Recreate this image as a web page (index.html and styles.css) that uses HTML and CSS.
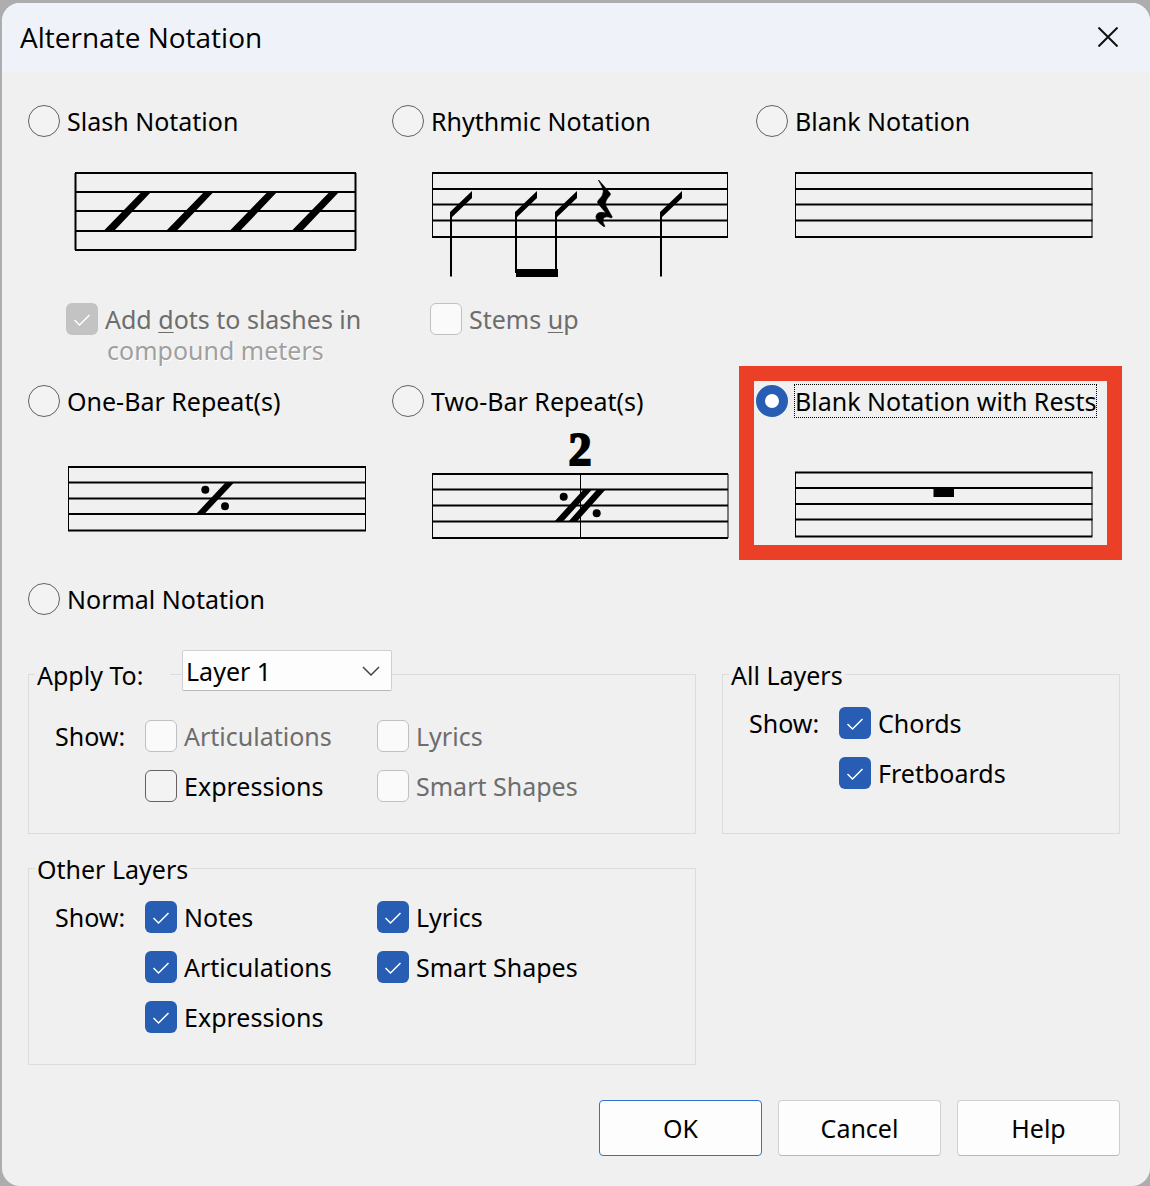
FILE: index.html
```html
<!DOCTYPE html>
<html lang="en">
<head>
    <meta charset="UTF-8">
    <meta name="viewport" content="width=device-width, initial-scale=1.0">
    <title>Alternate Notation</title>
    <link rel="stylesheet" href="styles.css">
</head>
<body>
    <form class="dialog">
        <header class="titlebar">
            <h1>Alternate Notation</h1>
            <button type="button" class="close" aria-label="Close">
                <svg width="20" height="20" viewBox="0 0 20 20"><path d="M0.5 0.5L19.5 19.5M19.5 0.5L0.5 19.5"/></svg>
            </button>
        </header>

        <div class="content">
            <div class="styles">
                <div class="style">
                    <label class="option"><input type="radio" name="notation"><span>Slash Notation</span></label>
                    <svg class="staff" viewBox="0 0 300 150">
                        <path class="lines" d="M9 36H290M9 55H290M9 74H290M9 94H290M9 113H290"/>
                        <path class="lines" d="M9.5 36V113M289.5 36V113"/>
                        <path d="M75.5 55H85L48 94H37.5ZM138 55H147.5L110.5 94H100ZM201.500 55H211L174 94H163.500ZM263.500 55H273L236 94H225.500Z"/>
                    </svg>
                    <label class="option sub"><input type="checkbox" checked disabled><span>Add <u>d</u>ots to slashes in</span></label>
                    <p class="more">compound meters</p>
                </div>

                <div class="style">
                    <label class="option"><input type="radio" name="notation"><span>Rhythmic Notation</span></label>
                    <svg class="staff" viewBox="0 0 300 150">
                        <path class="lines" d="M2 36H298M2 52H298M2 67.500H298M2 83.500H298M2 100H298"/>
                        <path class="ends" d="M2.500 36V100M297.500 36V100"/>
                        <path class="lines" d="M21 76V139.500M86 76V136M126 76V136M231 76V139.500"/>
                        <path d="M20 75L42 54V61L20 82ZM85 75L107 54V61L85 82ZM125 75L147 54V61L125 82ZM230 75L252 54V61L230 82Z"/>
                        <path d="M86 132H128V140H86Z"/>
                        <path transform="translate(-50 -47) scale(.3333)" stroke="#000" stroke-width="2" d="M656 270L690 309Q693 312 690 316Q672 335 678 348L697 381L694 384Q676 376 670 386Q666 396 675 409L672 410Q646 393 648 379Q652 362 678 369L655 342Q650 336 655 331Q670 318 670 304Q668 290 656 272Z"/>
                    </svg>
                    <label class="option sub"><input type="checkbox" disabled><span>Stems <u>u</u>p</span></label>
                </div>

                <div class="style">
                    <label class="option"><input type="radio" name="notation"><span>Blank Notation</span></label>
                    <svg class="staff" viewBox="0 0 300 150">
                        <path class="lines" d="M1 36H298.500M1 52H298.500M1 67.500H298.500M1 83.500H298.500M1 100H298.500"/>
                        <path class="ends" d="M1.500 36V100M298 36V100"/>
                    </svg>
                </div>

                <div class="style">
                    <label class="option"><input type="radio" name="notation"><span>One-Bar Repeat(s)</span></label>
                    <svg class="staff" viewBox="0 0 300 150">
                        <path class="lines" d="M2 50H300M2 65.500H300M2 81.500H300M2 97H300M2 113.500H300"/>
                        <path class="ends" d="M2.500 50V113M299.500 50V113"/>
                        <path d="M160 65H168.500L138.500 97H130Z"/>
                        <circle cx="139.300" cy="72.700" r="4"/>
                        <circle cx="159" cy="89.300" r="4"/>
                    </svg>
                </div>

                <div class="style">
                    <label class="option"><input type="radio" name="notation"><span>Two-Bar Repeat(s)</span></label>
                    <svg class="staff" viewBox="0 0 300 150">
                        <text x="150" y="48" text-anchor="middle">2</text>
                        <path class="lines" d="M2 57H298M2 72.500H298M2 88.500H298M2 104.500H298M2 121H298"/>
                        <path class="ends" d="M2.500 57V121M298 57V121"/>
                        <path class="ends" d="M150.500 57V121"/>
                        <path d="M154 72H162.500L132.500 105H124ZM167.500 72H176L146.500 105H138Z"/>
                        <circle cx="133.700" cy="79.700" r="4"/>
                        <circle cx="166.700" cy="96.300" r="4"/>
                    </svg>
                </div>

                <div class="style highlight">
                    <label class="option"><input type="radio" name="notation" checked><span>Blank Notation with Rests</span></label>
                    <svg class="staff" viewBox="0 0 300 150">
                        <path class="lines" d="M1 55.500H298.500M1 71H298.500M1 87H298.500M1 102.500H298.500M1 119.500H298.500"/>
                        <path class="ends" d="M1.500 55V119M298 55V119"/>
                        <path d="M139.500 71H160V80H139.500Z"/>
                    </svg>
                </div>

                <div class="style">
                    <label class="option"><input type="radio" name="notation"><span>Normal Notation</span></label>
                </div>
            </div>

            <div class="groups">
                <fieldset class="apply">
                    <legend>
                        <label for="layer">Apply To:</label>
                        <select id="layer">
                            <option>Layer 1</option>
                            <option>Layer 2</option>
                            <option>Layer 3</option>
                            <option>Layer 4</option>
                        </select>
                    </legend>
                    <div class="show">
                        <span class="caption">Show:</span>
                        <label class="option"><input type="checkbox" disabled><span>Articulations</span></label>
                        <label class="option"><input type="checkbox" disabled><span>Lyrics</span></label>
                        <label class="option first"><input type="checkbox"><span>Expressions</span></label>
                        <label class="option"><input type="checkbox" disabled><span>Smart Shapes</span></label>
                    </div>
                </fieldset>

                <fieldset>
                    <legend><span>All Layers</span></legend>
                    <div class="show">
                        <span class="caption">Show:</span>
                        <label class="option"><input type="checkbox" checked><span>Chords</span></label>
                        <label class="option first"><input type="checkbox" checked><span>Fretboards</span></label>
                    </div>
                </fieldset>

                <fieldset>
                    <legend><span>Other Layers</span></legend>
                    <div class="show">
                        <span class="caption">Show:</span>
                        <label class="option"><input type="checkbox" checked><span>Notes</span></label>
                        <label class="option"><input type="checkbox" checked><span>Lyrics</span></label>
                        <label class="option first"><input type="checkbox" checked><span>Articulations</span></label>
                        <label class="option"><input type="checkbox" checked><span>Smart Shapes</span></label>
                        <label class="option first"><input type="checkbox" checked><span>Expressions</span></label>
                    </div>
                </fieldset>
            </div>

            <div class="buttons">
                <button type="submit" class="btn default">OK</button>
                <button type="button" class="btn">Cancel</button>
                <button type="button" class="btn">Help</button>
            </div>
        </div>
    </form>
</body>
</html>
```
FILE: styles.css
```css
* {
    box-sizing: border-box;
}
body {
    margin: 0;
    padding: 3px 0 0 2px;
    background-color: #adadad;
    font-family: "Noto Sans", sans-serif;
    font-size: 25px;
    line-height: 32px;
    color: #000;
}
.dialog {
    min-height: calc(100vh - 3px);
    background-color: #f0f0f0;
    border-radius: 18px;
    overflow: hidden;
}
.titlebar {
    display: flex;
    align-items: center;
    justify-content: space-between;
    height: 69px;
    padding: 0 32px 2px 18px;
    background-color: #eff3f9;
}
h1 {
    margin: 0;
    font-family: "Open Sans", sans-serif;
    font-size: 28px;
    font-weight: normal;
}
.close {
    display: flex;
    padding: 0;
    border: none;
    background: none;
    cursor: pointer;
}
.close svg {
    fill: none;
    stroke: #111;
    stroke-width: 2;
}
.content {
    padding: 33px 30px 30px 26px;
}

/* notation styles */
.styles {
    display: grid;
    grid-template-columns: repeat(3, 1fr);
    row-gap: 16px;
}
.style {
    position: relative;
}
.option {
    display: flex;
    align-items: center;
    gap: 7px;
    height: 32px;
    white-space: nowrap;
}
.sub {
    margin: 16px 0 0 38px;
}
.more {
    margin: 0 0 4px 79px;
    line-height: 30px;
    color: #a0a0a0;
    text-shadow: 1px 1px #fff;
}
.staff {
    display: block;
    width: 300px;
    height: 150px;
    margin-left: 38px;
}
.staff .lines,
.staff .ends {
    fill: none;
    stroke: #000;
    stroke-width: 2;
}
.staff .ends {
    stroke-width: 1;
}
.staff text {
    font-family: "Liberation Serif", serif;
    font-size: 46px;
    font-weight: bold;
    stroke: #000;
    stroke-width: 2;
}
.highlight::after {
    content: "";
    position: absolute;
    inset: -19px -2px 7px -17px;
    border: 15px solid #eb4027;
    pointer-events: none;
}
.highlight .option span {
    outline: 1px dotted #000;
}

/* radios and tick boxes */
input {
    flex: none;
    width: 32px;
    height: 32px;
    margin: 0;
    appearance: none;
    border: 1px solid #626262;
    background: #f3f3f3 center / 100% no-repeat;
}
input[type="radio"] {
    border-radius: 50%;
}
input[type="radio"]:checked {
    border: 9px solid #275eb4;
    background-color: #fff;
}
input[type="checkbox"] {
    border-radius: 6px;
}
input[type="checkbox"]:checked {
    border: none;
    background-color: #275eb4;
    background-image: url("data:image/svg+xml,%3Csvg xmlns='http://www.w3.org/2000/svg' viewBox='0 0 32 32'%3E%3Cpath d='M8.500 17l5 5L23.500 12' fill='none' stroke='white' stroke-width='1.500'/%3E%3C/svg%3E");
}
input:disabled {
    border-color: #c0c0c0;
    background-color: #fafafa;
}
input[type="checkbox"]:checked:disabled {
    background-color: #c3c3c3;
}
input:disabled + span {
    color: #6d6d6d;
}
u {
    text-decoration-thickness: 1px;
    text-underline-offset: 3px;
}

/* layer groups */
.groups {
    display: grid;
    grid-template-columns: 668fr 398fr;
    gap: 34px 26px;
    margin-top: 59px;
}
fieldset {
    min-width: 0;
    margin: 0;
    padding: 0 0 31px 26px;
    border: 1px solid #dcdcdc;
}
legend {
    display: flex;
    float: left;
    align-items: flex-end;
    gap: 12px;
    width: 100%;
    height: 41px;
    margin: -25px 0 16px -20px;
    padding: 0;
}
.apply legend {
    margin-bottom: 29px;
}
legend span,
legend label {
    padding: 0 2px;
    background-color: #f0f0f0;
}
legend label {
    width: 135px;
}
select {
    width: 210px;
    height: 41px;
    padding: 0 3px;
    appearance: none;
    border: 1px solid #d0d0d0;
    border-bottom-color: #b8b8b8;
    border-radius: 2px;
    background: #fdfdfd url("data:image/svg+xml,%3Csvg xmlns='http://www.w3.org/2000/svg' viewBox='0 0 18 10'%3E%3Cpath d='M1 1l8 8 8-8' fill='none' stroke='%23444' stroke-width='1.500'/%3E%3C/svg%3E") right 11px center / 18px 10px no-repeat;
    font: inherit;
    color: inherit;
}
.show {
    display: grid;
    clear: both;
    grid-template-columns: 90px 232px 1fr;
    row-gap: 18px;
}
.first {
    grid-column: 2;
}

/* bottom buttons */
.buttons {
    display: flex;
    justify-content: flex-end;
    gap: 16px;
    margin-top: 35px;
}
.btn {
    width: 163px;
    height: 56px;
    border: 1px solid #d0d0d0;
    border-bottom-color: #b8b8b8;
    border-radius: 4px;
    background-color: #fdfdfd;
    font: inherit;
    color: inherit;
    cursor: pointer;
}
.btn.default {
    border-color: #2f74c9;
}
```
